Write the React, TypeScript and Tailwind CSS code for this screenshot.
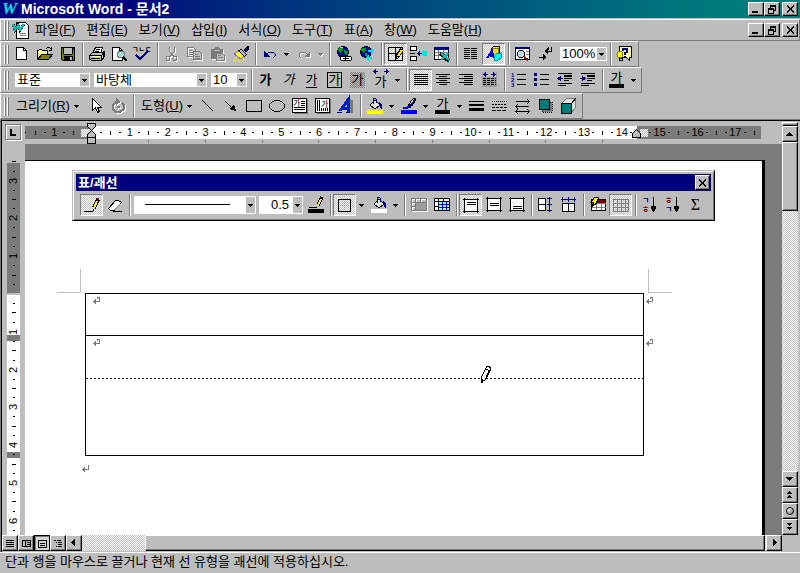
import type { ReactNode } from "react";
import clsx from "clsx";

const NAVY = "#00007b";
const GRAY = "#7b7b7b";

const raised =
  "border border-t-white border-l-white border-r-black border-b-black bg-[#bdbdbd] shadow-[inset_-1px_-1px_#7b7b7b]";
const checker =
  "bg-[conic-gradient(#fff_25%,#bdbdbd_0_50%,#fff_0_75%,#bdbdbd_0)] bg-[length:2px_2px]";

/* 16x16 toolbar glyphs, stroked in black unless stated */
const icons: Record<string, ReactNode> = {
  new: (
    <>
      <path d="M2.5 1.5h7l3 3v9h-10z" fill="#fff" />
      <path d="M9.5 1.5v3h3" />
    </>
  ),
  open: (
    <>
      <path d="M.5 13.5v-9h1l1-1h2l1 1h5v3" fill="#ffff9c" />
      <path d="M.5 13.5l4-5h11l-4 5z" fill="#7b7b00" />
      <path d="M9 2.5h1M10 1.5h3M13 2.5h1M14.5 1v3.5M12 4.5h3" />
    </>
  ),
  save: (
    <>
      <path d="M1.5 1.5h13v13h-12l-1-1z" fill="#7b7b00" />
      <path d="M4 2h8v6h-8z" fill="#bdbdbd" stroke="none" />
      <path d="M3.5 2v6M12.5 2v6M4 8.5h8M13.5 2v1" />
      <path d="M4 10h9v4h-9z" fill="#000" stroke="none" />
      <path d="M10 11h2v3h-2z" fill="#bdbdbd" stroke="none" />
    </>
  ),
  print: (
    <>
      <path d="M3.5 7.5l3-6h7l-2 6" fill="#fff" />
      <path d="M7 3.5h4M6 5.5h4" />
      <path d="M.5 9.5l3-3h9l3-1v5l-3 4h-9l-3-1z" fill="#bdbdbd" />
      <path d="M1 9.5h11.5v4M12.5 9.5l3-4M2 12.5h9M14 7v6" />
      <path d="M3 10.5h8" stroke="#fff" />
      <path d="M7 11.5h3" stroke="#e0e000" />
    </>
  ),
  preview: (
    <>
      <path d="M.5 1.5h7l3 3v10h-10z" fill="#fff" />
      <path d="M7.5 1.5v3h3" />
      <circle cx="9" cy="8.5" r="3.5" fill="#9ce0e0" stroke={GRAY} />
      <path d="M8 7h2v1h-2z" fill="#fff" stroke="none" />
      <path d="M11 11l4 4" strokeWidth="2" />
    </>
  ),
  spell: (
    <>
      <text x="-3" y="6" fontSize="7" fill="#000" stroke="none" fontWeight="bold">
        ㄱㄴㄷ
      </text>
      <path d="M1 9l4 4 8-8" stroke={NAVY} strokeWidth="2" />
    </>
  ),
  cut: (
    <>
      <path d="M5.5 1v4l2 3 3 3M10.5 1v4l-2 3-3 3" stroke={GRAY} />
      <circle cx="4" cy="12.5" r="2" stroke={GRAY} />
      <circle cx="11" cy="12.5" r="2" stroke={GRAY} />
    </>
  ),
  copy: (
    <>
      <path d="M.5 1.5h6l2 2v7h-8zM2 4.5h3M2 6.5h4M2 8.5h4" stroke={GRAY} />
      <path d="M6.5 5.5h6l2 2v6h-8z" stroke={GRAY} fill="#bdbdbd" />
      <path d="M8 8.5h3M8 10.5h5M8 12.5h5" stroke={GRAY} />
    </>
  ),
  paste: (
    <>
      <path d="M1 3h3l1-2h4l1 2h3v10h-12z" fill={GRAY} stroke="none" />
      <path d="M4 4.5h6" stroke="#bdbdbd" />
      <path d="M6.5 7.5h6l2 2v5h-8z" fill="#bdbdbd" stroke={GRAY} />
      <path d="M8 9.5h3M8 11.5h5" stroke={GRAY} />
    </>
  ),
  painter: (
    <>
      <path d="M15 0l1 3-3 3-2-2z" fill={NAVY} />
      <path d="M1 8l5-3 5 5-3 3z" fill="#ffff00" stroke={GRAY} />
      <path d="M5.5 4.5l3-1 5 5-2 2z" fill="#bdbdbd" />
      <path d="M0 14.5h3M5 15.5h3M1 12.5h3M10 13.5h2" stroke="#ffff00" />
    </>
  ),
  undo: (
    <>
      <path d="M5 8l2-2h4l2 2v2l-2 2" stroke={NAVY} />
      <path d="M2 5v6h6z" fill={NAVY} stroke="none" />
    </>
  ),
  redo: (
    <>
      <path d="M11 8l-2-2h-4l-2 2v2l2 2" stroke={GRAY} />
      <path d="M14 5v6h-6z" fill={GRAY} stroke="none" />
    </>
  ),
  link: (
    <>
      <circle cx="7" cy="6" r="5.5" fill="#00009c" />
      <path d="M3 2h4v3l-3 2-2-2zM8 4l4 1v3l-3 1z" fill="#009c00" stroke="none" />
      <path d="M4 1h3v1h-3z" fill="#9ce0e0" stroke="none" />
      <rect x="4.5" y="10.5" width="6" height="4" rx="2" fill="#fff" />
      <rect x="9.5" y="10.5" width="6" height="4" rx="2" fill="#fff" />
      <path d="M7 12.5h6" />
    </>
  ),
  web: (
    <>
      <circle cx="7" cy="6" r="5.5" fill="#00009c" />
      <path d="M3 2h4v3l-3 2-2-2zM6 7l3 1v3l-3-1z" fill="#009c00" stroke="none" />
      <path d="M9 4h3v-2l4 3-4 3v-2h-3z" fill="#00e0e0" stroke="none" />
      <path d="M13 13h-3v2l-4-3 4-3v2h3z" fill="#00e0e0" stroke="none" />
    </>
  ),
  tables: (
    <>
      <path d="M.5 1.5h14v13h-14zM7.5 1.5v13M.5 7.5h14" />
      <path d="M14 3l-5 8" strokeWidth="4" />
      <path d="M14 4l-4 6" stroke="#ffde00" strokeWidth="2" />
      <path d="M8 11l1 2" strokeWidth="2" />
    </>
  ),
  insert: (
    <>
      <path d="M-.5.5h6v4h-6zM-.5 10.5h6v4h-6z" fill="#fff" />
      <path d="M7 7.5h4" stroke={NAVY} />
      <path d="M6 7.5l3-3v6z" fill={NAVY} stroke="none" />
      <path d="M11 5h5v5h-5z" fill="#00e0e0" stroke="none" />
      <path d="M-1 7.5h5" />
    </>
  ),
  excel: (
    <>
      <path d="M.5 2.5h14v11h-14z" fill="#fff" />
      <path d="M0 1h15v3h-15z" fill={NAVY} stroke="none" />
      <path d="M1 6.5h13M1 9.5h13M4.5 4v9M9.5 4v9" stroke={GRAY} />
      <path d="M6 7l9 8" strokeWidth="4" />
      <path d="M7 7l8 7M14 7l-7 7" stroke="#00bdbd" strokeWidth="2" />
    </>
  ),
  columns: (
    <path d="M1 2.5h6M1 4.5h6M1 6.5h6M1 8.5h6M1 10.5h6M1 12.5h6M8 2.5h6M8 4.5h6M8 6.5h6M8 8.5h6M8 10.5h6M8 12.5h6" />
  ),
  drawing: (
    <>
      <path d="M5.5 2.5l2-2h6v8l-2 2h-6z" fill="#ffde00" />
      <path d="M12 2v7M6 2h6" stroke="#7b7b00" />
      <path d="M1 12l5-7 2 7M4 10h4" stroke="#0000de" strokeWidth="2" />
      <path d="M8 10l3-3h4v5l-4 3-3-1z" fill="#00ffff" stroke="#009c9c" />
    </>
  ),
  map: (
    <>
      <path d="M.5 1.5h14v12h-14z" fill="#fff" />
      <path d="M0 1h15v2h-15z" fill={NAVY} stroke="none" />
      <circle cx="6" cy="8" r="3.5" fill="#bde0e0" />
      <path d="M9 11l4 3" stroke="#9c0000" strokeWidth="2" />
      <path d="M11 5.5h3M11 8.5h3" stroke={GRAY} />
    </>
  ),
  marks: (
    <>
      <path d="M13.5 1v4h-5M1 11.5h5M10.5 1v3" />
      <path d="M10 2v6l-4-3zM5 8v6l4-3z" fill="#000" stroke="none" />
    </>
  ),
  help: (
    <>
      <path d="M2.5.5h12v11h-2v3l-3-3h-7z" fill="#ffff9c" />
      <path d="M6 5v-2h4v3l-2 1v2M8 10v1" stroke={NAVY} strokeWidth="2" />
      <circle cx="3" cy="8.5" r="3" fill="#ffff00" stroke="#7b7b00" />
      <path d="M2.5 12.5h3v2h-3z" fill="#fff" />
    </>
  ),
  justify: <path d="M1 2.5h14M1 4.5h14M1 6.5h14M1 8.5h14M1 10.5h14M1 12.5h14" />,
  center: <path d="M0 2.5h14M3 4.5h8M0 6.5h14M3 8.5h8M0 10.5h14M3 12.5h8" />,
  right: <path d="M0 2.5h14M5 4.5h9M0 6.5h14M5 8.5h9M0 10.5h14M5 12.5h9" />,
  distribute: (
    <>
      <path d="M0 0h15v15h-15z" fill="#9c9c9c" stroke="none" />
      <path d="M1 0h13v5h-13z" fill="#bdbdbd" stroke="none" />
      <path d="M2 2.5h4M9 2.5h4" stroke={NAVY} />
      <path d="M1 2.5l3-2.5v5zM14 2.5l-3-2.5v5z" fill={NAVY} stroke="none" />
      <path d="M1 6.5h13M1 8.5h13M1 10.5h13M1 12.5h13" strokeDasharray="3 1" />
    </>
  ),
  numbering: (
    <>
      <g fill={NAVY} stroke="none" fontSize="6" fontWeight="bold">
        <text x="0" y="5">1</text>
        <text x="0" y="10">2</text>
        <text x="0" y="15">3</text>
      </g>
      <path d="M6 2.5h9M6 7.5h9M6 12.5h9" />
    </>
  ),
  bullets: (
    <>
      <path d="M0 1h3v3h-3zM0 6h3v3h-3zM0 11h3v3h-3z" fill={NAVY} stroke="none" />
      <path d="M6 2.5h9M6 7.5h9M6 12.5h9" />
    </>
  ),
  outdent: (
    <>
      <path d="M1 1.5h14M7 4.5h8M7 6.5h8M7 8.5h5M1 11.5h14M1 13.5h8" />
      <path d="M7 3h8v2h-8z" fill="#000" stroke="none" />
      <path d="M2 6.5h4" stroke={NAVY} />
      <path d="M0 6.5l4-3v6z" fill={NAVY} stroke="none" />
    </>
  ),
  indent: (
    <>
      <path d="M1 1.5h14M7 4.5h8M7 6.5h8M7 8.5h5M1 11.5h14M1 13.5h8" />
      <path d="M7 3h8v2h-8z" fill="#000" stroke="none" />
      <path d="M0 6.5h4" stroke={NAVY} />
      <path d="M6 6.5l-4-3v6z" fill={NAVY} stroke="none" />
    </>
  ),
  pointer: <path d="M4.5.5v12l3-3 2 5 2-1-2-4h4z" fill="#fff" />,
  rotate: (
    <>
      <path d="M5 4l-3 3v4l3 3h4l4-3v-4l-2-2" stroke={GRAY} strokeWidth="2" />
      <path d="M5 0v7l5-3z" fill={GRAY} stroke="none" />
      <circle cx="7.5" cy="9" r="1.5" fill={GRAY} stroke="none" />
    </>
  ),
  line: <path d="M2 2l11 11" />,
  arrow: (
    <>
      <path d="M2 3l7 7" />
      <path d="M13 13l-7-2 5-5z" fill="#000" stroke="none" />
    </>
  ),
  rect: <path d="M.5 2.5h15v11h-15z" />,
  ellipse: <ellipse cx="8" cy="8" rx="7.5" ry="5.5" />,
  textbox: (
    <>
      <path d="M.5.5h14v14h-14z" fill="#fff" />
      <text x="1" y="8" fontSize="8" fill="#000" stroke="none">
        가
      </text>
      <path d="M9 3.5h4M9 5.5h4M9 7.5h4M2 9.5h11M2 11.5h11" />
      <path d="M15.5 1v14.5h-14" stroke={GRAY} />
    </>
  ),
  vtextbox: (
    <>
      <path d="M.5.5h14v14h-14z" fill="#fff" />
      <text x="6" y="9" fontSize="8" fill="#000" stroke="none">
        가
      </text>
      <path d="M2.5 2v11M4.5 2v11M6.5 10v3M8.5 10v3M10.5 10v3M12.5 10v3" />
      <path d="M15.5 1v14.5h-14" stroke={GRAY} />
    </>
  ),
  wordart: (
    <>
      <path d="M11 1l4 1v13h-4z" fill={GRAY} stroke="none" />
      <path d="M2 13l8-11v12M4 10h6" stroke="#0021bd" strokeWidth="3" />
      <path d="M-1 14.5h5M8 14.5h4" stroke={NAVY} />
    </>
  ),
  fill: (
    <>
      <path d="M3 7l5-5 5 5-5 4z" fill="#e0e0e0" />
      <path d="M6.5 6v-5l1-1h1l1 2v3" stroke={NAVY} />
      <path d="M12 4l3 3v4l-2-1v-3z" fill={NAVY} stroke="none" />
      <path d="M0 12h16v4h-16z" fill="#ffff00" stroke="none" />
    </>
  ),
  fillwhite: (
    <>
      <path d="M3 7l5-5 5 5-5 4z" fill="#e0e0e0" />
      <path d="M6.5 6v-5l1-1h1l1 2v3" stroke={NAVY} />
      <path d="M12 4l3 3v4l-2-1v-3z" fill={NAVY} stroke="none" />
      <path d="M0 12h16v4h-16z" fill="#fff" stroke="none" />
    </>
  ),
  brush: (
    <>
      <path d="M2 10h4l3-3" stroke="#0000de" strokeWidth="2" />
      <path d="M7.5 6.5l5-6h2v2l-4 6-2 1z" fill={NAVY} />
      <path d="M9 6l4-5" stroke="#ffde9c" />
      <path d="M0 12h16v4h-16z" fill="#0000ff" stroke="none" />
    </>
  ),
  linestyle: (
    <>
      <path d="M0 3.5h15" />
      <path d="M0 6h15v2h-15zM0 10h15v3h-15z" fill="#000" stroke="none" />
    </>
  ),
  dash: (
    <>
      <path d="M0 3.5h15" strokeDasharray="1 1" />
      <path d="M0 6.5h15" strokeDasharray="2 1" />
      <path d="M0 9.5h15" strokeDasharray="3 1" />
      <path d="M0 12.5h15" strokeDasharray="4 1" />
    </>
  ),
  arrows: (
    <path d="M1 3.5h13M1 8.5h13M1 13.5h13M12 1l2.5 2.5-2.5 2.5M3 6l-2.5 2.5 2.5 2.5M12 11l2.5 2.5-2.5 2.5M3 11l-2.5 2.5 2.5 2.5" />
  ),
  shadow: (
    <>
      <path d="M4 4h10v10h-10z" fill={GRAY} stroke="#000" strokeDasharray="1 1" />
      <path d="M1.5 1.5h10v10h-10z" fill="#007b7b" />
    </>
  ),
  cube: (
    <>
      <path d="M.5 5.5l5-5h9v9l-5 6z" fill="#e0e0e0" stroke={GRAY} />
      <path d="M.5 5.5h10v10h-10z" fill="#007b7b" />
      <path d="M10.5 5.5l4-5" />
    </>
  ),
  pencil: (
    <>
      <path d="M0 14.5h9" />
      <path d="M14 2l-4 9" strokeWidth="4" />
      <path d="M13 4l-3 7" stroke="#ffff00" strokeWidth="2" />
      <path d="M13 1h2v2h-2z" fill="#9c0000" stroke="none" />
      <path d="M9 12v2" />
    </>
  ),
  eraser: (
    <>
      <path d="M1.5 11.5l7-8h3l3 2-7 8h-4z" fill="#fff" />
      <path d="M7 13l6-7v2l-5 5z" fill="#9c9c9c" stroke="none" />
      <path d="M6 14.5h9" />
    </>
  ),
  pencolor: (
    <>
      <path d="M1 10.5h8" />
      <path d="M14 0l-4 8" strokeWidth="4" />
      <path d="M13 2l-3 6" stroke="#ffff00" strokeWidth="2" />
      <path d="M0 12h16v4h-16z" fill="#000" stroke="none" />
    </>
  ),
  box: (
    <>
      <path d="M1.5 2.5h12v12h-12z" />
      <path d="M7.5 4v10M3 8.5h10" stroke={GRAY} strokeDasharray="1 1" />
    </>
  ),
  merge: (
    <>
      <path d="M.5 1.5h15v12h-15zM.5 5.5h15M.5 9.5h4M4.5 1.5v12M9.5 1.5v4" stroke={GRAY} />
      <path d="M5 6h10v7h-10z" fill="#9c9c9c" stroke="none" />
    </>
  ),
  split: (
    <>
      <path d="M.5 1.5h15v12h-15z" fill="#fff" />
      <path d="M5 5h10v8h-10z" fill="#9cffff" stroke="none" />
      <path d="M.5 4.5h15M.5 9.5h4M4.5 1.5v12M9.5 1.5v3" />
      <path d="M5 7.5h10M5 10.5h10M8.5 5v8M12.5 5v8" stroke="#0000de" />
    </>
  ),
  top: (
    <>
      <path d="M1 3h14v11h-14z" fill="#fff" stroke="none" />
      <path d="M0 2.5h16M0 14.5h16M1.5 1v15M14.5 1v15M4 5.5h9M4 7.5h9" />
    </>
  ),
  middle: (
    <>
      <path d="M1 2h14v11h-14z" fill="#fff" stroke="none" />
      <path d="M0 1.5h16M0 13.5h16M1.5 0v15M14.5 0v15M4 6.5h9M4 8.5h9" />
    </>
  ),
  bottom: (
    <>
      <path d="M1 2h14v11h-14z" fill="#fff" stroke="none" />
      <path d="M0 1.5h16M0 13.5h16M1.5 0v15M14.5 0v15M4 9.5h9M4 11.5h9" />
    </>
  ),
  rows: (
    <>
      <path d="M.5 1.5h7v12h-7zM.5 7.5h7" fill="#fff" />
      <path d="M11.5 0v15M9 1.5h5M9 7.5h5M9 13.5h5" stroke={NAVY} />
    </>
  ),
  cols: (
    <>
      <path d="M1.5 6.5h12v8h-12zM7.5 6.5v8" fill="#fff" />
      <path d="M0 2.5h15M1.5 0v5M7.5 0v5M13.5 0v5" stroke={NAVY} />
    </>
  ),
  autoformat: (
    <>
      <path d="M1.5 2.5h14v11h-14z" fill="#fff" />
      <path d="M7 3h8v3h-8z" fill="#7b0000" stroke="none" />
      <path d="M1.5 6.5h14M1.5 10.5h14M6.5 6v7M11.5 6v7" stroke={GRAY} />
      <path d="M5 0h4l-2 4h2l-7 6 2-5h-3z" fill="#ffff00" />
    </>
  ),
  gridlines: (
    <path d="M.5 2.5h15v12h-15zM.5 6.5h15M.5 10.5h15M4.5 2v12M8.5 2v12M12.5 2v12" stroke={GRAY} />
  ),
  sortasc: (
    <>
      <g fontSize="8" fontWeight="bold" stroke="none">
        <text x="0" y="6" fill={NAVY}>
          ㄱ
        </text>
        <text x="0" y="15" fill="#7b0000">
          ㅎ
        </text>
      </g>
      <path d="M11.5 0v12" />
      <path d="M9 9h5v2l-2 4h-1l-2-4z" fill="#000" stroke="none" />
    </>
  ),
  sortdesc: (
    <>
      <g fontSize="8" fontWeight="bold" stroke="none">
        <text x="0" y="6" fill="#7b0000">
          ㅎ
        </text>
        <text x="0" y="15" fill={NAVY}>
          ㄱ
        </text>
      </g>
      <path d="M11.5 0v12" />
      <path d="M9 9h5v2l-2 4h-1l-2-4z" fill="#000" stroke="none" />
    </>
  ),
};

function Icon({ name }: { name: string }) {
  return (
    <svg
      width="16"
      height="16"
      viewBox="0 0 16 16"
      fill="none"
      stroke="#000"
      shapeRendering="crispEdges"
      className="shrink-0 overflow-visible"
    >
      {icons[name]}
    </svg>
  );
}

type ToolProps = {
  label: string;
  icon?: string;
  pressed?: boolean;
  disabled?: boolean;
  children?: ReactNode;
};

function Tool({ label, icon, pressed, disabled, children }: ToolProps) {
  return (
    <button
      type="button"
      aria-label={label}
      aria-pressed={pressed}
      disabled={disabled}
      className={clsx(
        "flex h-[22px] w-[23px] shrink-0 items-center border",
        icon ? "pl-[3px]" : "justify-center",
        pressed
          ? clsx(checker, "border-t-[#7b7b7b] border-l-[#7b7b7b] border-r-white border-b-white")
          : "border-transparent",
        disabled && "drop-shadow-[1px_1px_0_#fff]",
      )}
    >
      {icon ? <Icon name={icon} /> : children}
    </button>
  );
}

function Caret({ className = "fill-black" }: { className?: string }) {
  return (
    <svg width="5" height="3" viewBox="0 0 5 3" shapeRendering="crispEdges" className={className}>
      <path d="M0 0h5v1h-1v1h-1v1h-1v-1h-1v-1h-1z" />
    </svg>
  );
}

function Drop({ label, disabled }: { label: string; disabled?: boolean }) {
  return (
    <button
      type="button"
      aria-label={label}
      disabled={disabled}
      className={clsx(
        "flex h-[22px] w-[11px] shrink-0 items-center justify-center",
        disabled && "drop-shadow-[1px_1px_0_#fff]",
      )}
    >
      <Caret className={disabled ? "fill-[#7b7b7b]" : "fill-black"} />
    </button>
  );
}

function Sep() {
  return (
    <span className="mr-px ml-[3px] h-[22px] w-[2px] shrink-0 border-r border-l border-r-white border-l-[#7b7b7b]" />
  );
}

function Grip() {
  return (
    <span className="mr-px ml-[3px] flex h-[19px] shrink-0 gap-px">
      <span className="w-[2px] border-r border-l border-r-[#7b7b7b] border-l-white" />
      <span className="w-[2px] border-r border-l border-r-[#7b7b7b] border-l-white" />
    </span>
  );
}

function Combo({ label, value, className }: { label: string; value?: string; className: string }) {
  return (
    <span className={clsx("relative shrink-0 border border-white bg-white", className)}>
      <select
        aria-label={label}
        className="block h-full w-full appearance-none bg-transparent pr-[9px] pl-px text-[13px] leading-3 outline-none"
      >
        <option>{value}</option>
      </select>
      <span className="pointer-events-none absolute inset-y-0 right-0 flex w-[9px] items-center justify-center bg-[#bdbdbd]">
        <Caret />
      </span>
    </span>
  );
}

function Bar({ label, children }: { label: string; children: ReactNode }) {
  return (
    <div
      role="toolbar"
      aria-label={label}
      className="flex h-[26px] items-center self-start border border-t-white border-r-[#7b7b7b] border-b-[#7b7b7b] border-l-white pr-[2px]"
    >
      <Grip />
      {children}
    </div>
  );
}

function WindowButtons({ className }: { className: string }) {
  const cls = clsx(raised, "flex h-[14px] w-4 items-center justify-center");
  return (
    <div className={clsx("ml-auto flex", className)}>
      <button type="button" aria-label="최소화" className={cls}>
        <svg width="10" height="8" shapeRendering="crispEdges">
          <path d="M1 6h6v2h-6z" />
        </svg>
      </button>
      <button type="button" aria-label="이전 크기로" className={cls}>
        <svg width="10" height="9" shapeRendering="crispEdges" fill="none" stroke="#000">
          <path d="M3.5 3v-2.5h5v5h-2M3 1.5h6M1.5 3.5h5v5h-5zM1 4.5h6" />
        </svg>
      </button>
      <button type="button" aria-label="닫기" className={clsx(cls, "ml-[2px]")}>
        <svg width="9" height="8" shapeRendering="crispEdges" stroke="#000" strokeWidth="1.5">
          <path d="M1 .5l7 7M8 .5l-7 7" />
        </svg>
      </button>
    </div>
  );
}

const menus = [
  ["파일", "F"],
  ["편집", "E"],
  ["보기", "V"],
  ["삽입", "I"],
  ["서식", "O"],
  ["도구", "T"],
  ["표", "A"],
  ["창", "W"],
  ["도움말", "H"],
];

function StandardBar() {
  return (
    <Bar label="표준">
      <Tool label="새로 만들기" icon="new" />
      <Tool label="열기" icon="open" />
      <Tool label="저장" icon="save" />
      <Sep />
      <Tool label="인쇄" icon="print" />
      <Tool label="인쇄 미리 보기" icon="preview" />
      <Tool label="맞춤법 검사" icon="spell" />
      <Sep />
      <Tool label="잘라내기" icon="cut" disabled />
      <Tool label="복사" icon="copy" disabled />
      <Tool label="붙여넣기" icon="paste" disabled />
      <Tool label="서식 복사" icon="painter" />
      <Sep />
      <Tool label="실행 취소" icon="undo" />
      <Drop label="실행 취소 목록" />
      <Tool label="다시 실행" icon="redo" disabled />
      <Drop label="다시 실행 목록" disabled />
      <Sep />
      <Tool label="하이퍼링크 삽입" icon="link" />
      <Tool label="웹 도구 모음" icon="web" />
      <Sep />
      <Tool label="표/괘선" icon="tables" pressed />
      <Tool label="표 삽입" icon="insert" />
      <Tool label="Excel 워크시트 삽입" icon="excel" />
      <Sep />
      <Tool label="단" icon="columns" />
      <Tool label="그리기" icon="drawing" pressed />
      <Sep />
      <Tool label="문서 구조" icon="map" />
      <Tool label="편집 기호 표시" icon="marks" />
      <Combo label="확대/축소" value="100%" className="ml-[3px] h-[14px] w-[47px]" />
      <Sep />
      <Tool label="도움말" icon="help" />
    </Bar>
  );
}

function FormatBar() {
  return (
    <Bar label="서식">
      <div className="mr-px ml-[5px] flex gap-1">
        <Combo label="스타일" value="표준" className="h-[14px] w-[75px]" />
        <Combo label="글꼴" value="바탕체" className="h-[14px] w-[113px]" />
        <Combo label="글꼴 크기" value="10" className="h-[14px] w-9" />
      </div>
      <Sep />
      <Tool label="굵게">
        <span className="font-bold">가</span>
      </Tool>
      <Tool label="기울임꼴">
        <span className="italic">가</span>
      </Tool>
      <Tool label="밑줄">
        <span className="border-b border-black leading-[14px]">가</span>
      </Tool>
      <Tool label="문자 테두리">
        <span className="border border-black px-px leading-[14px]">가</span>
      </Tool>
      <Tool label="문자 음영">
        <span className="bg-[conic-gradient(#7b7b7b_25%,#bdbdbd_0_50%,#7b7b7b_0_75%,#bdbdbd_0)] bg-[length:2px_2px] px-[2px] leading-4">
          가
        </span>
      </Tool>
      <Tool label="문자 비율">
        <span className="relative pt-1">
          가
          <svg
            width="16"
            height="5"
            className="absolute -top-px -left-[2px]"
            shapeRendering="crispEdges"
            fill={NAVY}
          >
            <path d="M0 2h5v1h-5zM1 1h1v3h-1zM2 0h1v5h-1zM11 2h5v1h-5zM14 1h1v3h-1zM13 0h1v5h-1z" />
          </svg>
        </span>
      </Tool>
      <Drop label="문자 비율 목록" />
      <Sep />
      <Tool label="양쪽 맞춤" icon="justify" pressed />
      <Tool label="가운데 맞춤" icon="center" />
      <Tool label="오른쪽 맞춤" icon="right" />
      <Tool label="균등 분할" icon="distribute" />
      <Sep />
      <Tool label="번호 매기기" icon="numbering" />
      <Tool label="글머리 기호" icon="bullets" />
      <Tool label="내어쓰기" icon="outdent" />
      <Tool label="들여쓰기" icon="indent" />
      <Sep />
      <Tool label="글꼴 색">
        <span className="border-b-4 border-black px-[2px] leading-3">가</span>
      </Tool>
      <Drop label="글꼴 색 목록" />
    </Bar>
  );
}

function DrawingBar() {
  return (
    <Bar label="그리기">
      <button type="button" className="flex h-[22px] w-[74px] items-center gap-1 pl-[6px] whitespace-nowrap">
        <span>
          그리기(<u>R</u>)
        </span>
        <Caret />
      </button>
      <Tool label="개체 선택" icon="pointer" />
      <Tool label="자유 회전" icon="rotate" disabled />
      <Sep />
      <button type="button" className="flex h-[22px] w-[60px] items-center gap-1 pl-[5px] whitespace-nowrap">
        <span>
          도형(<u>U</u>)
        </span>
        <Caret />
      </button>
      <Tool label="선" icon="line" />
      <Tool label="화살표" icon="arrow" />
      <Tool label="직사각형" icon="rect" />
      <Tool label="타원" icon="ellipse" />
      <Tool label="가로 글상자" icon="textbox" />
      <Tool label="세로 글상자" icon="vtextbox" />
      <Tool label="WordArt" icon="wordart" />
      <Sep />
      <Tool label="채우기 색" icon="fill" />
      <Drop label="채우기 색 목록" />
      <Tool label="선 색" icon="brush" />
      <Drop label="선 색 목록" />
      <Tool label="글꼴 색">
        <span className="border-b-4 border-black px-[2px] leading-3">가</span>
      </Tool>
      <Drop label="글꼴 색 목록" />
      <Tool label="선 스타일" icon="linestyle" />
      <Tool label="대시 스타일" icon="dash" />
      <Tool label="화살표 스타일" icon="arrows" />
      <Tool label="그림자" icon="shadow" />
      <Tool label="3차원" icon="cube" />
    </Bar>
  );
}

const hUnits = ["1", "", ...Array.from({ length: 17 }, (_, i) => String(i + 1))];
const vUnits = ["3", "2", "1", "", "1", "2", "3", "4", "5", "6"];

function HorizontalRuler() {
  return (
    <div className="min-w-0 flex-1 overflow-hidden pt-[5px]">
      <div className="relative flex h-[13px] w-[736px] items-center bg-[linear-gradient(to_right,#7b7b7b_64px,#fff_64px,#fff_612px,#7b7b7b_612px)] text-[11px] leading-[13px]">
        <div className="flex w-[15px] shrink-0 items-center gap-[9px]">
          <i className="h-px w-px bg-black" />
          <i className="h-1 w-px bg-black" />
        </div>
        <div className="flex w-[719px] shrink-0">
          {hUnits.map((n, i) => (
            <div key={i} className="grid flex-1 grid-cols-4 items-center justify-items-center">
              <i className="h-px w-[2px] bg-black" />
              <span className="flex w-0 justify-center">{n}</span>
              <i className="h-px w-[2px] bg-black" />
              <i className="h-1 w-px bg-black" />
            </div>
          ))}
        </div>
        {/* Indent markers */}
        <i className={clsx(checker, "absolute left-[56px] h-2 w-2")} />
        <i className={clsx(checker, "absolute left-[615px] h-2 w-2")} />
        <svg
          width="10"
          height="22"
          className="absolute -top-[3px] left-[62px]"
          shapeRendering="crispEdges"
          fill="#bdbdbd"
          stroke="#000"
        >
          <path d="M.5.5h8v3l-4 4-4-4zM.5 14.5v-3l4-4 4 4v3zM.5 14.5h8v6h-8z" />
        </svg>
        <svg
          width="10"
          height="9"
          className="absolute top-[3px] left-[607px]"
          shapeRendering="crispEdges"
          fill="#bdbdbd"
          stroke="#000"
        >
          <path d="M.5 8.5v-4l4-4 4 4v4z" />
        </svg>
      </div>
      {/* Default tab stops */}
      <div className="mt-px ml-[123px] flex h-[3px] w-[455px] justify-between">
        {Array.from({ length: 9 }, (_, i) => (
          <i key={i} className="w-px bg-[#7b7b7b]" />
        ))}
      </div>
    </div>
  );
}

function VerticalRuler() {
  return (
    <div className="w-[23px] shrink-0 overflow-hidden pt-[13px] pl-[5px]">
      <div className="flex h-[378px] w-[13px] flex-col bg-[linear-gradient(#bdbdbd_6px,#7b7b7b_6px,#7b7b7b_136px,#bdbdbd_136px,#bdbdbd_138px,#fff_138px,#fff_178px,#7b7b7b_178px,#7b7b7b_184px,#fff_184px,#fff_295px,#7b7b7b_295px,#7b7b7b_301px,#fff_301px)] text-[11px]">
        {vUnits.map((n, i) => (
          <div key={i} className="grid min-h-0 flex-1 grid-rows-4 items-center justify-items-center">
            <i className="h-px w-1 bg-black" />
            <i className="h-px w-[2px] bg-black" />
            <span className="flex h-0 -rotate-90 items-center">{n}</span>
            <i className="h-px w-[2px] bg-black" />
          </div>
        ))}
      </div>
    </div>
  );
}

function CellMark() {
  return (
    <svg width="8" height="8" fill="none" stroke={GRAY} shapeRendering="crispEdges">
      <path d="M4 .5h3M6.5 0v5M4 4.5h3M4.5 0v2M0 4.5h4M1.5 3v3M2.5 2v5" />
    </svg>
  );
}

function ParagraphMark() {
  return (
    <svg width="8" height="8" fill="none" stroke={GRAY} shapeRendering="crispEdges">
      <path d="M6.5 0v5M0 4.5h7M1.5 3v3M2.5 2v5" />
    </svg>
  );
}

function TablesPalette() {
  return (
    <div
      role="toolbar"
      aria-label="표/괘선"
      className="absolute top-[26px] left-[47px] w-[643px] border border-t-[#bdbdbd] border-r-black border-b-black border-l-[#bdbdbd] bg-[#bdbdbd]"
    >
      <div className="border border-t-white border-r-[#7b7b7b] border-b-[#7b7b7b] border-l-white p-[2px] pb-0">
        <div className="flex h-[17px] items-center bg-[#00007b] pr-px pl-[2px]">
          <span className="text-[13px] leading-4 font-bold text-white">표/괘선</span>
          <button
            type="button"
            aria-label="닫기"
            className={clsx(raised, "ml-auto flex h-[15px] w-[15px] items-center justify-center")}
          >
            <svg width="9" height="8" stroke="#000" strokeWidth="2" shapeRendering="crispEdges">
              <path d="M1 .5l7 7M8 .5l-7 7" />
            </svg>
          </button>
        </div>
        <div className="flex h-7 items-center pl-1">
          <Tool label="표 그리기" icon="pencil" pressed />
          <Tool label="지우개" icon="eraser" />
          <Sep />
          <span className="relative ml-[2px] flex">
            <Combo label="선 스타일" className="h-[18px] w-[122px]" />
            <i className="pointer-events-none absolute top-2 left-[11px] h-px w-[85px] bg-black" />
          </span>
          <Combo label="선 두께" value="0.5" className="mr-px ml-[3px] h-[18px] w-11 pl-[10px]" />
          <Tool label="괘선 색" icon="pencolor" />
          <Sep />
          <Tool label="테두리" icon="box" pressed />
          <Drop label="테두리 목록" />
          <Tool label="음영 색" icon="fillwhite" />
          <Drop label="음영 색 목록" />
          <Sep />
          <Tool label="셀 병합" icon="merge" disabled />
          <Tool label="셀 분할" icon="split" />
          <Sep />
          <Tool label="위쪽 맞춤" icon="top" pressed />
          <Tool label="세로 가운데 맞춤" icon="middle" />
          <Tool label="아래쪽 맞춤" icon="bottom" />
          <Sep />
          <Tool label="행 높이를 같게" icon="rows" />
          <Tool label="열 너비를 같게" icon="cols" />
          <Sep />
          <Tool label="표 자동 서식" icon="autoformat" />
          <Tool label="눈금선 숨기기" icon="gridlines" pressed />
          <Sep />
          <Tool label="오름차순 정렬" icon="sortasc" />
          <Tool label="내림차순 정렬" icon="sortdesc" />
          <Tool label="자동 합계">
            <span className="font-['Liberation_Serif',serif] text-[16px]">Σ</span>
          </Tool>
        </div>
      </div>
    </div>
  );
}

function Page() {
  return (
    <div className="relative flex min-w-0 flex-1 bg-[#7b7b7b] pt-4 pr-[17px]">
      <div className="min-w-0 flex-1 overflow-hidden border-t border-r-3 border-black bg-white pt-[108px]">
        {/* Margin corners */}
        <div className="flex gap-[567px] pl-8">
          <i className="h-6 w-6 shrink-0 border-r border-b border-[#bdbdbd]" />
          <i className="h-6 w-6 shrink-0 border-b border-l border-[#bdbdbd]" />
        </div>
        <div className="flex pl-[60px]">
          <div className="relative shrink-0">
            <table className="w-[559px] table-fixed border-separate border-spacing-0 border border-black">
              <tbody>
                <tr>
                  <td className="h-[42px] border-b border-black pt-[3px] pl-[7px] align-top">
                    <CellMark />
                  </td>
                </tr>
                <tr>
                  <td className="h-[42px] pt-[3px] pl-[7px] align-top">
                    <CellMark />
                  </td>
                </tr>
                <tr>
                  <td className="h-[77px] bg-[repeating-linear-gradient(to_right,#000_0_2px,#fff_2px_4px)] bg-[length:100%_1px] bg-no-repeat" />
                </tr>
              </tbody>
            </table>
            {/* Pencil cursor */}
            <svg
              width="12"
              height="17"
              className="absolute top-[73px] left-[396px]"
              fill="#fff"
              stroke="#000"
              shapeRendering="crispEdges"
            >
              <path d="M.5 16v-5l5-10 2-.5 2 1v2l-5 10-3 2z" />
              <path d="M5 3l4 2M5 11l3-6" />
              <path d="M0 13h2v4h-2z" fill="#000" stroke="none" />
            </svg>
          </div>
          <div className="flex flex-col gap-[34px] pt-1 pl-[2px]">
            <CellMark />
            <CellMark />
          </div>
        </div>
        <div className="pt-[9px] pl-[57px]">
          <ParagraphMark />
        </div>
      </div>
      <TablesPalette />
    </div>
  );
}

function ScrollButton({ label, d }: { label: string; d: string }) {
  return (
    <button
      type="button"
      aria-label={label}
      className={clsx(raised, "flex h-4 w-4 shrink-0 items-center justify-center")}
    >
      <svg width="8" height="8" viewBox="0 0 8 8" shapeRendering="crispEdges">
        <path d={d} />
      </svg>
    </button>
  );
}

function VerticalScroll() {
  return (
    <div className="mr-[2px] flex w-4 shrink-0 flex-col pt-px">
      <i className={clsx(raised, "h-1")} />
      <ScrollButton label="위로" d="M3 2h1v1h1v1h1v1h1v1h-7v-1h1v-1h1v-1h1z" />
      <div className={clsx(checker, "flex-1")}>
        <div className={clsx(raised, "h-[69px]")} />
      </div>
      <ScrollButton label="아래로" d="M0 2h7v1h-1v1h-1v1h-1v1h-1v-1h-1v-1h-1v-1h-1z" />
      <ScrollButton label="이전 페이지" d="M3 0h1v1h1v1h1v1h-5v-1h1v-1h1zM3 4h1v1h1v1h1v1h-5v-1h1v-1h1z" />
      <button
        type="button"
        aria-label="개체별로 찾기"
        className={clsx(raised, "flex h-4 w-4 items-center justify-center")}
      >
        <i className="h-2 w-2 rounded-full border border-black bg-[linear-gradient(135deg,#fff,#7b7b7b)]" />
      </button>
      <ScrollButton label="다음 페이지" d="M1 0h5v1h-1v1h-1v1h-1v-1h-1v-1h-1zM1 4h5v1h-1v1h-1v1h-1v-1h-1v-1h-1z" />
    </div>
  );
}

const views = [
  { label: "기본 보기", d: "M0 1.5h8M0 3.5h8M0 5.5h8M0 7.5h8" },
  { label: "온라인 레이아웃 보기", d: "M.5 1.5h8v6h-8zM3.5 1v7M5 3.5h3M5 5.5h3" },
  { label: "페이지 레이아웃 보기", d: "M.5 1.5h8v7h-8zM2 4.5h5M2 6.5h5" },
  { label: "개요 보기", d: "M0 1.5h2M3 1.5h4M2 3.5h1M4 3.5h4M4 5.5h4M2 7.5h1M4 7.5h4" },
];

function BottomBar() {
  return (
    <div className="flex h-[17px] pb-px">
      {views.map((v, i) => (
        <button
          key={v.label}
          type="button"
          aria-label={v.label}
          aria-pressed={i === 2}
          className={clsx(
            "flex h-4 w-4 shrink-0 items-center justify-center",
            i === 2 ? "border border-black bg-[#d6d6d6] shadow-[inset_1px_1px_#7b7b7b]" : raised,
          )}
        >
          <svg
            width="9"
            height="9"
            viewBox="0 0 9 9"
            fill="none"
            stroke="#000"
            shapeRendering="crispEdges"
            className="shrink-0"
          >
            <path d={v.d} />
          </svg>
        </button>
      ))}
      <ScrollButton label="왼쪽으로" d="M5 0v7h-1v-1h-1v-1h-1v-1h-1v-1h1v-1h1v-1h1v-1z" />
      <div className={clsx(checker, "flex flex-1 pr-px pl-[63px]")}>
        <div className={clsx(raised, "flex-1")} />
      </div>
      <ScrollButton label="오른쪽으로" d="M3 0v7h1v-1h1v-1h1v-1h1v-1h-1v-1h-1v-1h-1v-1z" />
      <span className="w-[18px] shrink-0" />
    </div>
  );
}

export default function App() {
  return (
    <div className="flex min-h-screen flex-col overflow-hidden bg-[#bdbdbd] font-['Liberation_Sans','Noto_Sans_CJK_KR',sans-serif] text-[13px] leading-4 text-black">
      <header className="mb-px flex h-[18px] items-center bg-linear-to-r from-[#00007b] from-15% to-[#007b7b] to-90% pl-[2px]">
        <span className="w-[19px] font-['Liberation_Serif',serif] text-[17px] leading-4 font-bold text-[#00e0e0] italic">
          W
        </span>
        <h1 className="text-[14px] leading-4 font-bold text-white">Microsoft Word - 문서2</h1>
        <WindowButtons className="pr-[2px]" />
      </header>

      <nav className="flex h-[22px] items-center border border-t-white border-r-[#7b7b7b] border-b-[#7b7b7b] border-l-white">
        <Grip />
        <svg width="17" height="17" shapeRendering="crispEdges" className="mr-[6px] ml-[2px] shrink-0">
          <path d="M4.5.5h9l3 3v13h-12z" fill="#fff" stroke="#000" />
          <path d="M8 11.5h6M8 13.5h6" stroke={GRAY} />
          <path d="M1 2l2 6 3-5 2 5 4-6" fill="none" stroke="#000" strokeWidth="3" />
          <path d="M1 2l2 6 3-5 2 5 4-6" fill="none" stroke="#00bdbd" strokeWidth="2" />
        </svg>
        <div className="flex gap-[11px]">
          {menus.map(([name, key]) => (
            <button key={key} type="button" className="whitespace-nowrap">
              {name}(<u>{key}</u>)
            </button>
          ))}
        </div>
        <WindowButtons className="pr-px" />
      </nav>

      <StandardBar />
      <FormatBar />
      <DrawingBar />

      <main className="flex flex-1 border-t border-l border-[#7b7b7b]">
        <div className="flex min-w-0 flex-1 flex-col border-t border-l border-black">
          <div className="flex min-w-0 flex-1">
            <div className="flex min-w-0 flex-1 flex-col">
              <div className="flex h-[23px]">
                <div className="w-[23px] shrink-0 pt-[3px] pl-[3px]">
                  <button
                    type="button"
                    aria-label="왼쪽 탭"
                    className="flex h-4 w-4 items-center justify-center border border-[#7b7b7b] shadow-[inset_1px_1px_#fff,1px_1px_#fff]"
                  >
                    <i className="mt-px h-[7px] w-[6px] border-b-2 border-l-2 border-black" />
                  </button>
                </div>
                <HorizontalRuler />
              </div>
              <div className="flex min-h-0 flex-1">
                <VerticalRuler />
                <Page />
              </div>
            </div>
            <VerticalScroll />
          </div>
          <BottomBar />
        </div>
      </main>

      <footer className="h-[21px] border-t border-white pt-px pl-[5px]">
        단과 행을 마우스로 끌거나 현재 선 유형을 괘선에 적용하십시오.
      </footer>
    </div>
  );
}
